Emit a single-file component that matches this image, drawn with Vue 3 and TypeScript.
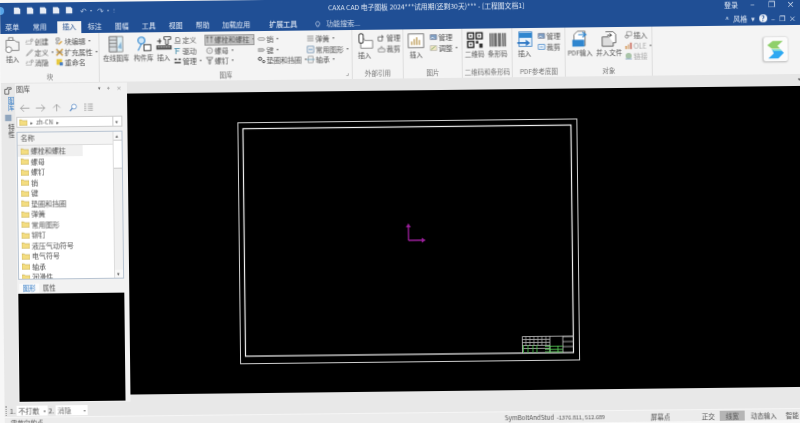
<script setup lang="ts">
interface Item {
  icon: string
  label: string
  caret?: boolean
  off?: boolean
  active?: boolean
}

interface Col {
  w: number
  big?: Item
  items?: Item[]
}

interface Group {
  name: string
  w: number
  launcher?: boolean
  cols: Col[]
}

const tabs = ['菜单', '常用', '插入', '标注', '图幅', '工具', '视图', '帮助', '加载应用', '扩展工具']

const groups: Group[] = [
  {
    name: '块',
    w: 99,
    cols: [
      { w: 24, big: { icon: 'block', label: '插入' } },
      {
        w: 30,
        items: [
          { icon: 'dash', label: '创建' },
          { icon: 'pen', label: '定义', caret: true },
          { icon: 'dash', label: '消隐' }
        ]
      },
      {
        w: 45,
        items: [
          { icon: 'bedit', label: '块编辑', caret: true },
          { icon: 'attr', label: '扩充属性', caret: true },
          { icon: 'rename', label: '重命名' }
        ]
      }
    ]
  },
  {
    name: '图库',
    w: 253,
    launcher: true,
    cols: [
      { w: 33, big: { icon: 'cabinet', label: '在线图库' } },
      { w: 22, big: { icon: 'parts', label: '构件库' } },
      { w: 18, big: { icon: 'libins', label: '插入' } },
      {
        w: 32,
        items: [
          { icon: 'def', label: '定义' },
          { icon: 'drive', label: '驱动' },
          { icon: 'manage', label: '管理', caret: true }
        ]
      },
      {
        w: 52,
        items: [
          { icon: 'bolt', label: '螺栓和螺柱', caret: true, active: true },
          { icon: 'nut', label: '螺母', caret: true },
          { icon: 'screw', label: '螺钉', caret: true }
        ]
      },
      {
        w: 49,
        items: [
          { icon: 'pin', label: '销', caret: true },
          { icon: 'key', label: '键', caret: true },
          { icon: 'washer', label: '垫圈和挡圈', caret: true }
        ]
      },
      {
        w: 47,
        items: [
          { icon: 'spring', label: '弹簧', caret: true },
          { icon: 'shape', label: '常用图形', caret: true },
          { icon: 'bearing', label: '轴承', caret: true }
        ]
      }
    ]
  },
  {
    name: '外部引用',
    w: 51,
    cols: [
      { w: 24, big: { icon: 'xref', label: '插入' } },
      {
        w: 27,
        items: [
          { icon: 'xmanage', label: '管理' },
          { icon: 'xclip', label: '裁剪' }
        ]
      }
    ]
  },
  {
    name: '图片',
    w: 59,
    cols: [
      { w: 25, big: { icon: 'chart', label: '插入' } },
      {
        w: 34,
        items: [
          { icon: 'picm', label: '管理' },
          { icon: 'pica', label: '调整', caret: true }
        ]
      }
    ]
  },
  {
    name: '二维码和条形码',
    w: 50,
    cols: [
      { w: 24, big: { icon: 'qr', label: '二维码' } },
      { w: 22, big: { icon: 'barcode', label: '条形码' } }
    ]
  },
  {
    name: 'PDF参考底图',
    w: 53,
    cols: [
      { w: 24, big: { icon: 'pdfins', label: '插入' } },
      {
        w: 29,
        items: [
          { icon: 'picm', label: '管理' },
          { icon: 'pdfclip', label: '裁剪' }
        ]
      }
    ]
  },
  {
    name: '对象',
    w: 87,
    cols: [
      { w: 29, big: { icon: 'pdfin', label: 'PDF输入' } },
      { w: 29, big: { icon: 'merge', label: '并入文件' } },
      {
        w: 29,
        items: [
          { icon: 'objins', label: '插入' },
          { icon: 'ole', label: 'OLE', caret: true, off: true },
          { icon: 'link', label: '链接', off: true }
        ]
      }
    ]
  }
]

const files = ['螺栓和螺柱', '螺母', '螺钉', '销', '键', '垫圈和挡圈', '弹簧', '常用图形', '铆钉', '液压气动符号', '电气符号', '轴承', '润滑件']

// title block lines, in canvas coordinates
const gridRows = [250.5, 253.5, 256.5, 259.5]
const gridCols = [396, 400, 404, 408, 412, 416]
const greenCols = [393.5, 398, 403, 407]
const sideRows = [248, 253, 258]
</script>

<template>
  <div class="shell">
    <svg class="defs" aria-hidden="true">
      <defs>
        <symbol id="i-dash" viewBox="0 0 10 10"><path d="M1 4h6v4H1z" fill="none" stroke="#888" stroke-dasharray="1.5 1" /><circle cx="8" cy="3" r="1.4" fill="none" stroke="#888" /></symbol>
        <symbol id="i-pen" viewBox="0 0 10 10"><path d="M1 9l2-3 5-5 1 1-5 5z" fill="none" stroke="#888" /></symbol>
        <symbol id="i-bedit" viewBox="0 0 10 10"><rect x="1" y="1" width="4" height="3" fill="none" stroke="#777" /><path d="M4 9l4-4" stroke="#d79a2b" stroke-width="1.5" /><circle cx="2" cy="7" r="1.2" fill="none" stroke="#777" /></symbol>
        <symbol id="i-attr" viewBox="0 0 10 10"><path d="M1 1l8 8M9 1L1 9" stroke="#c9922e" stroke-width="1.6" /><path d="M1 5h8" stroke="#777" /></symbol>
        <symbol id="i-rename" viewBox="0 0 10 10"><rect x="1" y="1" width="7" height="7" fill="#e8c93f" /><rect x="5" y="5" width="4" height="4" fill="#4a7fc0" /></symbol>
        <symbol id="i-def" viewBox="0 0 10 10"><path d="M1 9h8M3 7V2h4l1 2v3z" fill="none" stroke="#777" /></symbol>
        <symbol id="i-drive" viewBox="0 0 10 10"><path d="M1 2h7M3 2v7M3 5h4" fill="none" stroke="#5a9bb5" stroke-width="1.2" /></symbol>
        <symbol id="i-manage" viewBox="0 0 10 10"><path d="M1 2h3v2H1zM6 2h3v2H6zM1 6h8v2H1z" fill="#666" /></symbol>
        <symbol id="i-bolt" viewBox="0 0 10 10"><path d="M1 1h3v2H1zM2 3h1v6H2zM6 1h3v2H6zM7 3h1v6H7z" fill="#777" /></symbol>
        <symbol id="i-nut" viewBox="0 0 10 10"><circle cx="5" cy="5" r="3.6" fill="none" stroke="#999" stroke-width="1.2" /><circle cx="5" cy="5" r="1.4" fill="#ccc" /></symbol>
        <symbol id="i-screw" viewBox="0 0 10 10"><path d="M1 1h8l-2 3H3zM4 4h2v5H4z" fill="none" stroke="#777" /></symbol>
        <symbol id="i-pin" viewBox="0 0 10 10"><rect x="1" y="3.5" width="8" height="3" rx="1" fill="none" stroke="#888" /></symbol>
        <symbol id="i-key" viewBox="0 0 10 10"><path d="M1 3h6l2 2-2 2H1z" fill="#bbb" stroke="#888" stroke-width=".6" /></symbol>
        <symbol id="i-washer" viewBox="0 0 10 10"><circle cx="3" cy="3.5" r="2" fill="none" stroke="#333" stroke-width="1.2" /><circle cx="7.5" cy="7" r="1.5" fill="none" stroke="#333" /></symbol>
        <symbol id="i-spring" viewBox="0 0 10 10"><path d="M1 2h8M1 4h8M1 6h8M1 8h8" stroke="#999" /></symbol>
        <symbol id="i-shape" viewBox="0 0 10 10"><rect x="1" y="1" width="8" height="8" fill="none" stroke="#6d8fb0" /><path d="M2.5 4h5v2h-5z" fill="#8fb0d0" /></symbol>
        <symbol id="i-bearing" viewBox="0 0 10 10"><path d="M2 1h6v8H2z" fill="none" stroke="#999" /><path d="M0 5h10" stroke="#7aa8c0" stroke-width="1.4" /></symbol>
        <symbol id="i-xmanage" viewBox="0 0 10 10"><path d="M1 4h5v5H1z" fill="#fff" stroke="#555" /><path d="M5 1l3 3-2 1z" fill="#555" /></symbol>
        <symbol id="i-xclip" viewBox="0 0 10 10"><path d="M1 5h8v4H1zM3 5l2-3 2 3" fill="none" stroke="#888" /></symbol>
        <symbol id="i-picm" viewBox="0 0 10 10"><rect x="1" y="2" width="8" height="6" fill="#7f9fc4" stroke="#667" stroke-width=".6" /><path d="M2 7l2-2 2 2" stroke="#fff" fill="none" /></symbol>
        <symbol id="i-pica" viewBox="0 0 10 10"><rect x="1" y="2" width="8" height="6" fill="#f2e8c4" stroke="#999" stroke-width=".6" /><path d="M2 7l5-4" stroke="#6a9a5b" /></symbol>
        <symbol id="i-pdfclip" viewBox="0 0 10 10"><rect x="1" y="2" width="8" height="6" fill="#fff" stroke="#3f83c7" /><path d="M3 5h4" stroke="#3f83c7" /></symbol>
        <symbol id="i-objins" viewBox="0 0 10 10"><path d="M3 1h6v5H3z" fill="none" stroke="#999" /><circle cx="3" cy="7" r="2" fill="none" stroke="#777" /></symbol>
        <symbol id="i-ole" viewBox="0 0 10 10"><path d="M1 5h2v4H1z" fill="#d89a5a" /><path d="M4 3h2v6H4z" fill="#d9b48c" /><path d="M7 1h2v8H7z" fill="#c96a5a" /></symbol>
        <symbol id="i-link" viewBox="0 0 10 10"><circle cx="5" cy="5" r="3.8" fill="#a9c4a8" /><path d="M1 8h8v1.5H1z" fill="#8eaac4" /></symbol>

        <symbol id="i-block" viewBox="0 0 20 20"><path d="M2 4h10l2 2h3v10H2z" fill="none" stroke="#777" /><circle cx="5" cy="15" r="3.5" fill="#fff" stroke="#777" /><rect x="5" y="1" width="5" height="3" fill="#fff" stroke="#777" /></symbol>
        <symbol id="i-cabinet" viewBox="0 0 20 20"><path d="M2 1h9v18H2z" fill="#d8dde0" stroke="#666" /><path d="M2 5h9M2 9h9M2 13h9" stroke="#777" /><path d="M11 1h7v18h-7z" fill="#dff0f6" stroke="#888" /><path d="M12 14l4-7 1 9z" fill="#8cb8d8" /></symbol>
        <symbol id="i-parts" viewBox="0 0 20 20"><circle cx="7" cy="6" r="4" fill="#cfe6f7" stroke="#2f86cf" stroke-width="1.3" /><path d="M7 10L3 18" stroke="#2f86cf" stroke-width="1.2" /><rect x="10" y="11" width="8" height="7" fill="#fff" stroke="#444" stroke-width="1.2" /></symbol>
        <symbol id="i-libins" viewBox="0 0 20 20"><path d="M10 2h8v3h-3v6h-3V5h-2z" fill="#fff" stroke="#333" /><path d="M2 7h5M5 4v6" stroke="#333" stroke-width="1.2" /><rect x="1" y="12" width="18" height="5" fill="#555" /><path d="M3 14h14" stroke="#ddd" stroke-dasharray="2 1" /></symbol>
        <symbol id="i-xref" viewBox="0 0 20 20"><path d="M5 6v12h14V9H10L8 6" fill="#fff" stroke="#777" /><rect x="3" y="1" width="5" height="11" rx="2.4" fill="#fff" stroke="#444" stroke-width="1.2" /></symbol>
        <symbol id="i-chart" viewBox="0 0 20 20"><rect x="1" y="2" width="18" height="16" fill="#fff" stroke="#666" /><path d="M5 15v-4M8 15V8M11 15V6M14 15V9" stroke="#b8944a" stroke-width="1.4" /></symbol>
        <symbol id="i-qr" viewBox="0 0 20 20"><g fill="none" stroke="#222" stroke-width="1.6"><rect x="1.5" y="1.5" width="7" height="7" /><rect x="11.5" y="1.5" width="7" height="7" /><rect x="1.5" y="11.5" width="7" height="7" /></g><path d="M4 4h2v2H4zM14 4h2v2h-2zM4 14h2v2H4zM11 11h3v3h-3zM15 14h4v5h-4z" fill="#333" /></symbol>
        <symbol id="i-barcode" viewBox="0 0 20 20"><path d="M1 2v16M3.5 2v16M6 2v16M8 2v16M11 2v16M13 2v16M16 2v16M18.5 2v16" stroke="#333" stroke-width="1.3" /></symbol>
        <symbol id="i-pdfins" viewBox="0 0 20 20"><rect x="3" y="1" width="15" height="17" fill="#eaf3fb" stroke="#3f83c7" /><rect x="3" y="2" width="15" height="6" fill="#2f86cf" /><path d="M1 13h10v-3l5 4-5 4v-3H1z" fill="#2f78c4" /></symbol>
        <symbol id="i-pdfin" viewBox="0 0 20 20"><path d="M3 5l4-4h9v17H3z" fill="#fff" stroke="#666" /><rect x="1" y="11" width="14" height="8" fill="#2f86cf" /><path d="M8 5h8M13 2l4 3-4 3" fill="none" stroke="#2f86cf" stroke-width="1.4" /></symbol>
        <symbol id="i-merge" viewBox="0 0 20 20"><path d="M2 8h10l3 3v8H2z" fill="#ddd" stroke="#555" /><path d="M6 2h9l3 3v10h-3" fill="#fff" stroke="#555" /><path d="M8 6h5M11 4l2 2-2 2" fill="none" stroke="#222" /></symbol>
      </defs>
    </svg>

    <header class="titlebar">
      <div class="title-row">
        <div class="qat">
          <span class="qat-dot"></span>
          <svg v-for="n in 5" :key="n" class="qat-ico" viewBox="0 0 10 10"><path d="M1 1h6l2 2v6H1z" fill="#e8edf5" /></svg>
          <span class="qat-arrow">↶</span><span class="qat-small">▾</span>
          <span class="qat-arrow">↷</span><span class="qat-small">▾</span>
          <span class="qat-small">⋮</span>
        </div>
        <div class="doc-title">CAXA CAD 电子图板 2024***试用期(还剩30天)*** - [工程图文档1]</div>
        <div class="win-btns">
          <span class="login">登录</span>
          <span class="win-btn">–</span>
          <span class="win-btn">❐</span>
          <span class="win-btn">×</span>
        </div>
      </div>
      <div class="tab-row">
        <span v-for="t in tabs" :key="t" class="tab" :class="{ current: t === '插入' }">{{ t }}</span>
        <span class="search">
          <svg class="search-ico" viewBox="0 0 10 10"><path d="M5 1a3 3 0 0 1 2 5L6 8H4L3 6a3 3 0 0 1 2-5z" fill="none" stroke="#d5e0f0" /></svg>
          功能搜索...
        </span>
        <span class="tab-right">
          <span class="tr-txt">^</span>
          <span class="tr-txt">风格</span>
          <span class="tr-txt">▾</span>
          <span class="help">?</span>
          <span class="tr-txt">–</span>
          <span class="tr-txt">❐</span>
          <span class="tr-txt">×</span>
        </span>
      </div>
    </header>

    <section class="ribbon">
      <div v-for="g in groups" :key="g.name" class="group" :style="{ width: g.w + 'px' }">
        <div class="group-body">
          <div v-for="(c, i) in g.cols" :key="i" class="col" :style="{ width: c.w + 'px' }">
            <div v-if="c.big" class="big">
              <svg class="big-ico"><use :href="'#i-' + c.big.icon" /></svg>
              <span class="big-label">{{ c.big.label }}</span>
            </div>
            <template v-else>
              <div
                v-for="it in c.items"
                :key="it.label"
                class="small"
                :class="{ off: it.off, active: it.active }"
              >
                <svg class="small-ico"><use :href="'#i-' + it.icon" /></svg>
                <span>{{ it.label }}</span>
                <span v-if="it.caret" class="caret"></span>
              </div>
            </template>
          </div>
        </div>
        <div class="group-name">
          {{ g.name }}
          <span v-if="g.launcher" class="launcher">⌟</span>
        </div>
      </div>
      <div class="logo-area">
        <div class="logo">
          <svg viewBox="0 0 24 24" width="22" height="22">
            <path d="M9 3h11l-6 5.5 3 3H8L3 7.500z" fill="#8fd06a" />
            <path d="M8 12h9l4 4-6 6H4l6-5.500z" fill="#2fa9f2" />
            <path d="M8 12h9l2 2H10z" fill="#8be0d6" />
          </svg>
        </div>
      </div>
    </section>

    <div class="band"><span class="band-caret">▾</span></div>

    <main class="work">
      <aside class="side">
        <div class="strip">
          <svg class="strip-ico" viewBox="0 0 10 10"><path d="M1 9V3h3V1h5v2H6v6z" fill="none" stroke="#555" /></svg>
          <span class="strip-tab on">图库</span>
          <svg class="strip-ico" viewBox="0 0 10 10"><rect x="1" y="1" width="8" height="8" fill="#8fa5bd" /></svg>
          <span class="strip-tab">特性</span>
        </div>
        <div class="panel">
          <div class="panel-head">
            <span>图库</span>
            <span class="panel-btns">▾ ⌖ ×</span>
          </div>
          <div class="nav">
            <svg viewBox="0 0 16 12" class="nav-ico"><path d="M15 6H2M7 1L2 6l5 5" fill="none" stroke="#888" /></svg>
            <svg viewBox="0 0 16 12" class="nav-ico"><path d="M1 6h13M9 1l5 5-5 5" fill="none" stroke="#888" /></svg>
            <svg viewBox="0 0 16 12" class="nav-ico"><path d="M8 11V1M3 6l5-5 5 5" fill="none" stroke="#888" /></svg>
            <svg viewBox="0 0 16 12" class="nav-ico"><circle cx="10" cy="4.500" r="3.500" fill="#fff" stroke="#4a7fc0" /><path d="M7.500 7L4 11" stroke="#4a7fc0" stroke-width="1.5" /></svg>
            <svg viewBox="0 0 16 12" class="nav-ico"><path d="M2 1h3M7 1h7M2 4h3M7 4h7M2 7h3M7 7h7M2 10h3M7 10h7" stroke="#555" stroke-dasharray="1 .6" /></svg>
          </div>
          <div class="pathbox">
            <svg class="folder" viewBox="0 0 10 8"><path d="M0 1h3l1 1h6v6H0z" fill="#f4dd80" stroke="#b59b45" stroke-width=".6" /></svg>
            <span class="tri">▸</span>
            <span>zh-CN</span>
            <span class="tri">▸</span>
            <span class="path-drop">▾</span>
          </div>
          <div class="list">
            <div class="list-main">
              <div class="list-head">名称</div>
              <div v-for="(f, i) in files" :key="f" class="row" :class="{ hot: i === 0 }">
                <svg class="folder" viewBox="0 0 10 8"><path d="M0 1h3l1 1h6v6H0z" fill="#f4dd80" stroke="#b59b45" stroke-width=".6" /></svg>
                <span>{{ f }}</span>
              </div>
            </div>
            <div class="scroll">
              <span class="scroll-btn">▴</span>
              <span class="scroll-thumb"></span>
              <span class="scroll-track"></span>
              <span class="scroll-btn">▾</span>
            </div>
          </div>
          <div class="preview-tabs">
            <span class="ptab on">图形</span>
            <span class="ptab">属性</span>
          </div>
          <div class="preview"></div>
        </div>
      </aside>
      <div class="canvas">
        <svg class="drawing" viewBox="0 0 700 301" width="700" height="301">
          <rect x="110.500" y="30.500" width="339" height="241" fill="none" stroke="#cfcfcf" />
          <rect x="115.500" y="36.500" width="328" height="227.500" fill="none" stroke="#f2f2f2" stroke-width="1.200" />
          <!-- title block -->
          <g stroke-width=".8" fill="none">
            <path d="M392.500 247.500h51M392.500 264V247.500M420 247.500V264M433 247.500V264" stroke="#c8c8c8" />
            <line v-for="y in gridRows" :key="y" x1="392.500" x2="420" :y1="y" :y2="y" stroke="#bdbdbd" />
            <line v-for="x in gridCols" :key="x" :x1="x" :x2="x" y1="247.500" y2="256.500" stroke="#a8a8a8" />
            <line v-for="y in sideRows" :key="y" x1="433" x2="443.500" :y1="y" :y2="y" stroke="#c8c8c8" />
            <line v-for="x in greenCols" :key="x" :x1="x" :x2="x" y1="256" y2="264" stroke="#46c846" />
            <path d="M415 257.500h18M415 260.500h18M415 263h18" stroke="#58d058" />
            <path d="M420 257v7M428 257v7" stroke="#58d058" />
          </g>
          <!-- coordinate marker -->
          <g stroke="#9a1f9a" stroke-width="1.300" fill="#9a1f9a">
            <path d="M279.800 150v-15M279.800 150h15" fill="none" />
            <path d="M279.800 133l-2.500 4h5zM297 150l-4-2.500v5z" stroke="none" />
          </g>
        </svg>
      </div>
    </main>

    <div class="tools">
      <span class="grip"></span>
      <span class="tool-no">1.</span>
      <span class="tool-select s1">不打散<i>▾</i></span>
      <span class="tool-no">2.</span>
      <span class="tool-select s2">消隐<i>▾</i></span>
    </div>

    <footer class="status">
      <span class="prompt">需节向的点</span>
      <span class="st-name">SymBoltAndStud</span>
      <span class="st-xy">-1376.811, 512.689</span>
      <span class="st-snap">屏幕点</span>
      <span class="st-cell">正交</span>
      <span class="st-cell sel">线宽</span>
      <span class="st-cell">动态输入</span>
      <span class="st-cell">智能<i>▾</i></span>
    </footer>
  </div>
</template>

<style>
html,
body {
  margin: 0;
  height: 100%;
  overflow: hidden;
  background: #f7f7f7;
}
</style>

<style scoped>
/* the source is a slightly tilted photo of the window, so the whole app is turned */
.shell {
  width: 812px;
  height: 426px;
  margin-top: 3px;
  display: flex;
  flex-direction: column;
  transform: rotate(-0.65deg);
  transform-origin: 0 0;
  filter: blur(0.35px);
  font-family: "Noto Sans CJK SC", "Liberation Sans", sans-serif;
  font-size: 7px;
  color: #555;
  background: #e8e8e8;
  overflow: hidden;
}

.defs {
  position: absolute;
  width: 0;
  height: 0;
}

.titlebar {
  height: 31px;
  flex: none;
  background: #204f95;
  color: #e3ebf6;
}

.title-row {
  height: 16px;
  display: flex;
  align-items: center;
  position: relative;
}

.qat {
  display: flex;
  align-items: center;
  gap: 3px;
  width: 328px;
  flex: none;
}

.qat-dot {
  width: 4px;
  height: 8px;
  background: #58a5e8;
  border-radius: 0 4px 4px 0;
  margin-right: 6px;
}

.qat-ico {
  width: 8px;
  height: 8px;
  margin-right: 2px;
}

.qat-arrow {
  font-size: 8px;
  color: #9fb6d8;
  margin-left: 2px;
}

.qat-small {
  font-size: 4px;
  color: #9fb6d8;
}

.doc-title {
  width: 396px;
  flex: none;
  white-space: nowrap;
  font-size: 6.8px;
}

.win-btns {
  display: flex;
  align-items: center;
  padding-top: 3px;
}

.login {
  width: 19px;
}

.win-btn {
  width: 19px;
  text-align: center;
  font-size: 8px;
}

.tab-row {
  height: 15px;
  display: flex;
  align-items: flex-start;
  padding-left: 2px;
}

.tab {
  width: 27px;
  height: 12px;
  margin-top: 3px;
  line-height: 11px;
  text-align: center;
  flex: none;
  white-space: nowrap;
}

.tab:first-child {
  width: 20px;
}

.tab:nth-child(2) {
  width: 35px;
}

.tab:nth-child(3) {
  width: 24px;
  background: #f3f3f3;
  color: #234f90;
}

.tab:nth-child(9) {
  width: 40px;
}

.tab:nth-child(10) {
  width: 38px;
  margin-left: 8px;
  font-weight: 500;
}

.search {
  margin: 3px 0 0 12px;
  width: 411px;
  flex: none;
  line-height: 11px;
  display: flex;
  align-items: center;
  gap: 5px;
  color: #cdd9ea;
}

.search-ico {
  width: 7px;
  height: 8px;
}

.tab-right {
  margin-top: 1px;
  display: flex;
  align-items: center;
  gap: 4px;
  height: 14px;
}

.tr-txt {
  font-size: 7px;
}

.help {
  width: 8px;
  height: 8px;
  border-radius: 50%;
  background: #eef3fa;
  color: #204f95;
  font-size: 7px;
  font-weight: 700;
  line-height: 8px;
  text-align: center;
}

.ribbon {
  height: 49px;
  flex: none;
  display: flex;
  background: #f4f4f4;
}

.group {
  flex: none;
  display: flex;
  flex-direction: column;
  box-sizing: border-box;
  border-right: 1px solid #dedede;
}

.group-body {
  flex: 1;
  display: flex;
  padding-top: 3px;
}

.col {
  flex: none;
  display: flex;
  flex-direction: column;
}

.big {
  display: flex;
  flex-direction: column;
  align-items: center;
}

.big-ico {
  width: 17px;
  height: 17px;
}

.big-label {
  line-height: 10px;
  white-space: nowrap;
  font-size: 6.5px;
}

.small {
  height: 10.500px;
  display: flex;
  align-items: center;
  gap: 1px;
  padding-left: 1px;
  white-space: nowrap;
}

.small.active {
  background: #c9c9c9;
  outline: 1px solid #9a9a9a;
  outline-offset: -1px;
  margin-right: 2px;
}

.small.off {
  color: #aaa;
}

.small-ico {
  width: 8px;
  height: 8px;
  flex: none;
}

.caret {
  width: 0;
  height: 0;
  margin-left: 2px;
  border: 1.500px solid transparent;
  border-top: 2px solid #666;
  border-bottom: 0;
}

.group-name {
  height: 10px;
  margin-bottom: 1px;
  line-height: 10px;
  text-align: center;
  position: relative;
  color: #777;
  white-space: nowrap;
  font-size: 6.5px;
}

.launcher {
  position: absolute;
  right: 3px;
  top: -1px;
  color: #777;
}

.logo-area {
  flex: 1;
  padding: 12px 0 0 111px;
}

.logo {
  width: 24px;
  height: 24px;
  border-radius: 2px;
  background: #fbfbfb;
  box-shadow: 0 1px 2px rgba(0, 0, 0, 0.25);
  display: flex;
  align-items: center;
  justify-content: center;
}

.band {
  height: 12px;
  flex: none;
  background: #e6e6e6;
  text-align: right;
  padding-right: 12px;
  line-height: 10px;
  font-size: 5px;
  color: #555;
}

.work {
  height: 301px;
  flex: none;
  display: flex;
  margin-top: 0;
}

.side {
  width: 125.500px;
  flex: none;
  display: flex;
  margin-top: -11px;
  height: 319px;
  position: relative;
  z-index: 1;
}

.strip {
  width: 14px;
  flex: none;
  padding: 3px 0 0 3px;
  box-sizing: border-box;
  display: flex;
  flex-direction: column;
  gap: 2px;
  background: #e8e8e8;
}

.strip-ico {
  width: 8px;
  height: 8px;
}

.strip-tab {
  writing-mode: vertical-rl;
  font-size: 6.5px;
  line-height: 8px;
  color: #444;
  letter-spacing: 1px;
}

.strip-tab.on {
  color: #2f78c4;
}

.panel {
  flex: 1;
  display: flex;
  flex-direction: column;
  padding: 0 5px 0 1px;
  background: #f2f2f2;
  min-width: 0;
}

.panel-head {
  height: 10px;
  display: flex;
  justify-content: space-between;
  line-height: 10px;
  padding-right: 0;
}

.panel-btns {
  font-size: 5px;
  color: #666;
  word-spacing: 5px;
}

.nav {
  height: 23px;
  box-sizing: border-box;
  padding: 6px 0 0 3px;
  display: flex;
  align-items: center;
  gap: 5px;
}

.nav-ico {
  width: 11px;
  height: 9px;
}

.pathbox {
  height: 11px;
  display: flex;
  align-items: center;
  gap: 3px;
  padding-left: 2px;
  background: #fff;
  border: 1px solid #ccc;
  box-sizing: border-box;
  font-size: 6px;
  position: relative;
}

.path-drop {
  position: absolute;
  right: 0;
  top: 0;
  bottom: 0;
  width: 8px;
  border-left: 1px solid #ccc;
  text-align: center;
  font-size: 5px;
  line-height: 9px;
}

.tri {
  font-size: 5px;
}

.folder {
  width: 8px;
  height: 7px;
  flex: none;
}

.list {
  height: 148px;
  margin-top: 4px;
  display: flex;
  border: 1px solid #b8c4d2;
  box-sizing: border-box;
  background: #fff;
  overflow: hidden;
}

.list-main {
  flex: 1;
  min-width: 0;
}

.list-head {
  height: 12px;
  line-height: 11px;
  padding-left: 3px;
  background: #f4f4f4;
  border-bottom: 1px solid #ddd;
}

.row {
  height: 10.500px;
  display: flex;
  align-items: center;
  gap: 2px;
  padding-left: 3px;
  white-space: nowrap;
}

.row.hot {
  background: #f0f0f0;
  margin-right: 30px;
}

.scroll {
  width: 9px;
  flex: none;
  display: flex;
  flex-direction: column;
  background: #f0f0f0;
  border-left: 1px solid #ddd;
  box-sizing: border-box;
}

.scroll-btn {
  height: 8px;
  line-height: 8px;
  text-align: center;
  font-size: 5px;
  background: #f8f8f8;
}

.scroll-thumb {
  height: 27px;
  background: #fff;
  border-top: 1px solid #ccc;
  border-bottom: 1px solid #ccc;
}

.scroll-track {
  flex: 1;
}

.preview-tabs {
  height: 13px;
  display: flex;
  align-items: flex-end;
  padding: 0 0 1px 1px;
  box-sizing: content-box;
}

.ptab {
  width: 20px;
  text-align: center;
  line-height: 9px;
  font-size: 6.500px;
}

.ptab.on {
  color: #2f78c4;
  background: #fbfbfb;
}

.preview {
  height: 108px;
  background: #000;
  margin-left: 0;
}

.canvas {
  flex: 1;
  background: #000;
  overflow: hidden;
}

.drawing {
  display: block;
}

.tools {
  height: 21px;
  flex: none;
  box-sizing: border-box;
  padding: 10px 0 0 1px;
  display: flex;
  align-items: flex-start;
  gap: 1px;
  background: #e8e8e8;
}

.grip {
  width: 2px;
  height: 10px;
  border-left: 1px dotted #888;
}

.tool-no {
  line-height: 10px;
}

.tool-select {
  height: 10px;
  line-height: 10px;
  background: #fff;
  display: flex;
  justify-content: space-between;
  padding: 0 2px;
  box-sizing: border-box;
}

.tool-select i {
  font-style: normal;
  font-size: 4px;
}

.s1 {
  width: 31px;
}

.s2 {
  width: 32px;
  color: #777;
}

.status {
  height: 12px;
  flex: none;
  display: flex;
  align-items: center;
  border-top: 1px solid #f5f5f5;
  box-sizing: border-box;
  background: #ececec;
  font-size: 6.500px;
}

.prompt {
  width: 500px;
  flex: none;
  padding-left: 6px;
  box-sizing: border-box;
  margin-top: -2px;
}

.st-name {
  width: 52px;
  flex: none;
  font-size: 6.200px;
}

.st-xy {
  width: 94px;
  flex: none;
  font-size: 5.600px;
}

.st-snap {
  width: 47px;
  flex: none;
}

.st-cell {
  padding: 0 4px;
  margin-right: 1px;
  flex: none;
  height: 10px;
  line-height: 10px;
}

.st-cell i {
  font-style: normal;
  font-size: 4px;
  margin-left: 3px;
}

.st-cell.sel {
  background: #b5b5b5;
  padding: 0 6px;
  margin-right: 2px;
}
</style>
